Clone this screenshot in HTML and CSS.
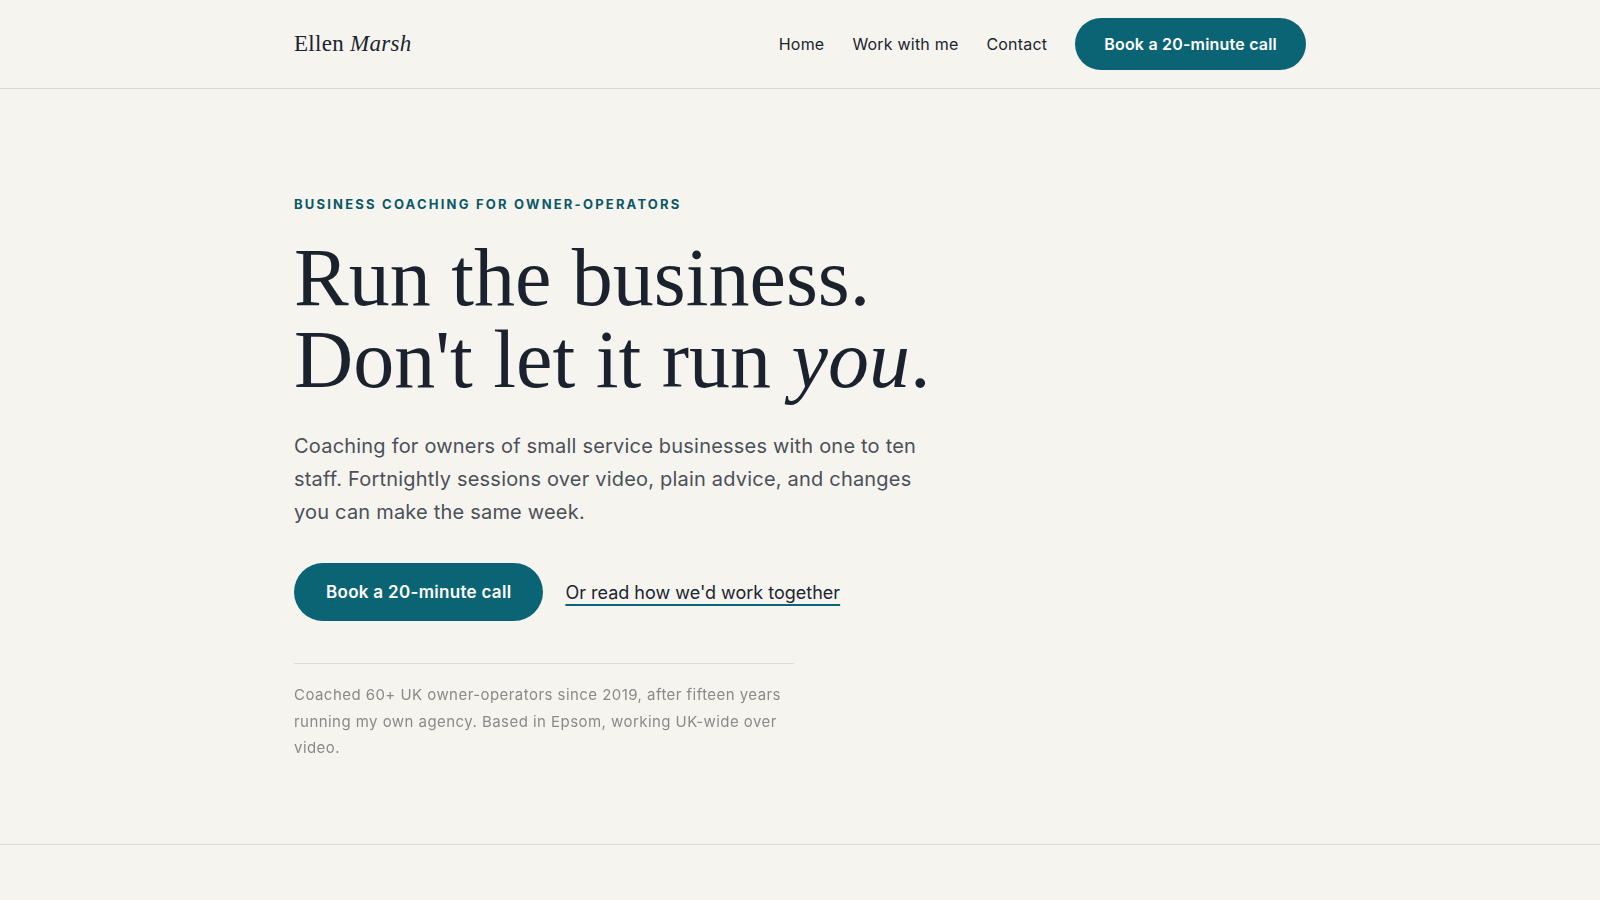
FILE: index.html
```html
<!DOCTYPE html>
<html lang="en">
<head>
<meta charset="utf-8">
<title>Ellen Marsh — Business coaching for owner-operators</title>
<link rel="stylesheet" href="styles.css">
</head>
<body>
<header class="site-header">
  <div class="wrap header-inner">
    <a class="logo" href="#">Ellen <em>Marsh</em></a>
    <nav class="nav">
      <a href="#">Home</a>
      <a href="#">Work with me</a>
      <a href="#">Contact</a>
      <a class="btn btn-nav" href="#">Book a 20-minute call</a>
    </nav>
  </div>
</header>

<main>
  <section class="hero">
    <div class="wrap">
      <p class="eyebrow">Business coaching for owner-operators</p>
      <h1 class="headline">Run the business.<br>Don't let it run <em>you</em>.</h1>
      <p class="lede">Coaching for owners of small service businesses with one to ten staff. Fortnightly sessions over video, plain advice, and changes you can make the same week.</p>
      <div class="actions">
        <a class="btn btn-hero" href="#">Book a 20-minute call</a>
        <a class="text-link" href="#">Or read how we'd work together</a>
      </div>
      <p class="trust">Coached 60+ UK owner-operators since 2019, after fifteen years running my own agency. Based in Epsom, working UK-wide over video.</p>
    </div>
  </section>
</main>
</body>
</html>
```

FILE: styles.css
```css
* { box-sizing: border-box; }

html, body {
  margin: 0;
  padding: 0;
}

body {
  background: #f5f4ef;
  color: #1c2430;
  font-family: Inter, "Open Sans", "Liberation Sans", sans-serif;
}

a { color: inherit; text-decoration: none; }

.wrap {
  width: 1012px;
  margin: 0 auto;
}

/* Header */
.site-header {
  border-bottom: 1px solid #d9d7d0;
}

.header-inner {
  height: 88px;
  display: flex;
  align-items: center;
  justify-content: space-between;
}

.logo {
  font-family: "Liberation Serif", "DejaVu Serif", serif;
  font-size: 23px;
  color: #1c2430;
  letter-spacing: 0.3px;
}

.logo em { font-style: italic; }

.nav {
  display: flex;
  align-items: center;
  gap: 28px;
  font-size: 16px;
  letter-spacing: 0.2px;
  color: #1c2430;
}

.btn {
  display: inline-flex;
  align-items: center;
  justify-content: center;
  background: #0b6473;
  color: #ffffff;
  font-weight: 600;
  border-radius: 999px;
}

.btn-nav {
  height: 52px;
  padding: 0 29px;
  font-size: 16px;
}

/* Hero */
.hero {
  padding: 106px 0 82px;
  border-bottom: 1px solid #d9d7d0;
}

.eyebrow {
  margin: 0;
  font-size: 13px;
  font-weight: 700;
  text-transform: uppercase;
  letter-spacing: 0.17em;
  color: #0b5866;
  line-height: 18px;
}

.headline {
  margin: 24px 0 0;
  font-family: "Liberation Serif", "DejaVu Serif", serif;
  font-weight: 400;
  font-size: 82px;
  line-height: 82px;
  color: #1b222d;
}

.headline em { font-style: italic; }

.lede {
  margin: 29px 0 0;
  max-width: 645px;
  font-size: 20px;
  line-height: 33px;
  color: #4b5058;
  letter-spacing: 0.2px;
}

.actions {
  margin-top: 34px;
  display: flex;
  align-items: center;
  gap: 22px;
}

.btn-hero {
  height: 58px;
  padding: 0 32px;
  font-size: 17px;
  letter-spacing: 0.3px;
}

.text-link {
  font-size: 18px;
  color: #1c2430;
  text-decoration: underline;
  text-decoration-color: #0b6473;
  text-decoration-thickness: 2px;
  text-underline-offset: 5px;
}

.trust {
  margin: 42px 0 0;
  width: 500px;
  padding-top: 18px;
  border-top: 1px solid #dedcd5;
  font-size: 15px;
  line-height: 26.5px;
  letter-spacing: 0.45px;
  color: #8a8a88;
  filter: blur(0.5px);
}
```
